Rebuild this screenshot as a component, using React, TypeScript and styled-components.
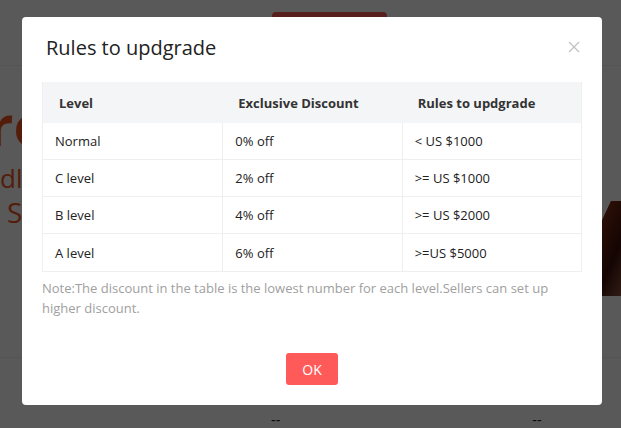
import React from "react";
import styled, { createGlobalStyle } from "styled-components";

const GlobalStyle = createGlobalStyle`
  html, body { margin: 0; padding: 0; }
  body {
    background: #ffffff;
    font-family: "Open Sans", "Noto Sans", "Liberation Sans", sans-serif;
  }
  * { box-sizing: border-box; }
`;

const Page = styled.div`
  position: relative;
  width: 621px;
  height: 428px;
  overflow: hidden;
  background: #ffffff;
`;

const TopBar = styled.div`
  height: 65px;
  padding: 12px 0 0 272px;
`;

const PrimaryButton = styled.div`
  width: 115px;
  height: 34px;
  border-radius: 4px;
  background: #ff5a5a;
`;

const Band = styled.div`
  height: 293px;
  display: flex;
  justify-content: space-between;
  background: #fefefe;
  border-top: 1px solid #f0f0f0;
  border-bottom: 1px solid #f0f0f0;
`;

const Hero = styled.div`
  display: flex;
  flex-direction: column;
  padding-top: 28px;
  color: #f0521f;
  font-family: "Open Sans", sans-serif;
  white-space: nowrap;
`;

const HeroBig = styled.div`
  font-size: 56px;
  font-weight: 700;
  line-height: 60px;
  margin-left: -12px;
`;

const HeroSmall = styled.div<{ $indent: number; $gap: number; $size: number }>`
  font-size: ${(p) => p.$size}px;
  line-height: 30px;
  margin-top: ${(p) => p.$gap}px;
  padding-left: ${(p) => p.$indent}px;
`;

const HeroImage = styled.div`
  width: 40px;
  margin-top: 135px;
  height: 95px;
  background: linear-gradient(115deg, transparent 35%, #7a2a14 36%, #3a0f08 70%, #8a5040 100%);
`;

const BottomRow = styled.div`
  display: flex;
  padding: 54px 0 0 271px;
  gap: 252px;
  font-size: 14px;
  color: #222;
  font-family: "Liberation Sans", sans-serif;
`;

const Overlay = styled.div`
  position: absolute;
  inset: 0;
  background: rgba(0, 0, 0, 0.65);
  padding: 17px 0 0 22px;
  display: flex;
  align-items: flex-start;
`;

const Modal = styled.div`
  position: relative;
  width: 580px;
  background: #ffffff;
  border-radius: 4px;
  padding: 16px 20px 20px;
  display: flex;
  flex-direction: column;
`;

const Title = styled.h2`
  margin: 0 0 19px 4px;
  font-size: 20px;
  line-height: 30px;
  font-weight: 400;
  color: #222;
`;

const Close = styled.button`
  position: absolute;
  top: 24px;
  right: 22px;
  width: 12px;
  height: 12px;
  padding: 0;
  border: 0;
  background: transparent;
  display: flex;
  cursor: pointer;
`;

const Table = styled.div`
  border: 1px solid #efefef;
  border-top: 0;
`;

const Row = styled.div<{ $head?: boolean }>`
  display: grid;
  grid-template-columns: 1fr 1fr 1fr;
  height: ${(p) => (p.$head ? "41px" : "37px")};
  background: ${(p) => (p.$head ? "#f4f5f7" : "#ffffff")};
  border-bottom: ${(p) => (p.$head ? "0" : "1px solid #efefef")};
  &:last-child { border-bottom: 0; }
`;

const Cell = styled.div<{ $head?: boolean }>`
  display: flex;
  align-items: center;
  padding-left: ${(p) => (p.$head ? "16px" : "12px")};
  font-size: 13px;
  font-weight: ${(p) => (p.$head ? 700 : 400)};
  color: ${(p) => (p.$head ? "#333" : "#222")};
  border-left: ${(p) => (p.$head ? "0" : "1px solid #efefef")};
  &:first-child { border-left: 0; }
`;

const Note = styled.p`
  margin: 6px 0 0;
  font-size: 13px;
  line-height: 20px;
  color: #a0a0a0;
`;

const Footer = styled.div`
  display: flex;
  justify-content: center;
  margin-top: 35px;
`;

const OkButton = styled.button`
  width: 52px;
  height: 32px;
  border: 0;
  border-radius: 3px;
  background: #ff5a5a;
  color: #ffffff;
  font-family: inherit;
  font-size: 14px;
  padding: 0;
  cursor: pointer;
`;

const rows = [
  ["Normal", "0% off", "< US $1000"],
  ["C level", "2% off", ">= US $1000"],
  ["B level", "4% off", ">= US $2000"],
  ["A level", "6% off", ">=US $5000"],
];

export default function App() {
  return (
    <Page>
      <GlobalStyle />
      <TopBar>
        <PrimaryButton />
      </TopBar>
      <Band>
        <Hero>
          <HeroBig>ro</HeroBig>
          <HeroSmall $indent={0} $gap={9} $size={26}>dl</HeroSmall>
          <HeroSmall $indent={7} $gap={4} $size={28}>S</HeroSmall>
        </Hero>
        <HeroImage />
      </Band>
      <BottomRow>
        <span>--</span>
        <span>--</span>
      </BottomRow>
      <Overlay>
        <Modal>
          <Title>Rules to updgrade</Title>
          <Close aria-label="close">
            <svg width="12" height="12" viewBox="0 0 12 12">
              <path d="M1 1 L11 11 M11 1 L1 11" stroke="#c2c2c2" strokeWidth="1.3" fill="none" />
            </svg>
          </Close>
          <Table>
            <Row $head>
              <Cell $head>Level</Cell>
              <Cell $head>Exclusive Discount</Cell>
              <Cell $head>Rules to updgrade</Cell>
            </Row>
            {rows.map((r) => (
              <Row key={r[0]}>
                {r.map((c) => (
                  <Cell key={c}>{c}</Cell>
                ))}
              </Row>
            ))}
          </Table>
          <Note>
            Note:The discount in the table is the lowest number for each level.Sellers can set up higher discount.
          </Note>
          <Footer>
            <OkButton>OK</OkButton>
          </Footer>
        </Modal>
      </Overlay>
    </Page>
  );
}
